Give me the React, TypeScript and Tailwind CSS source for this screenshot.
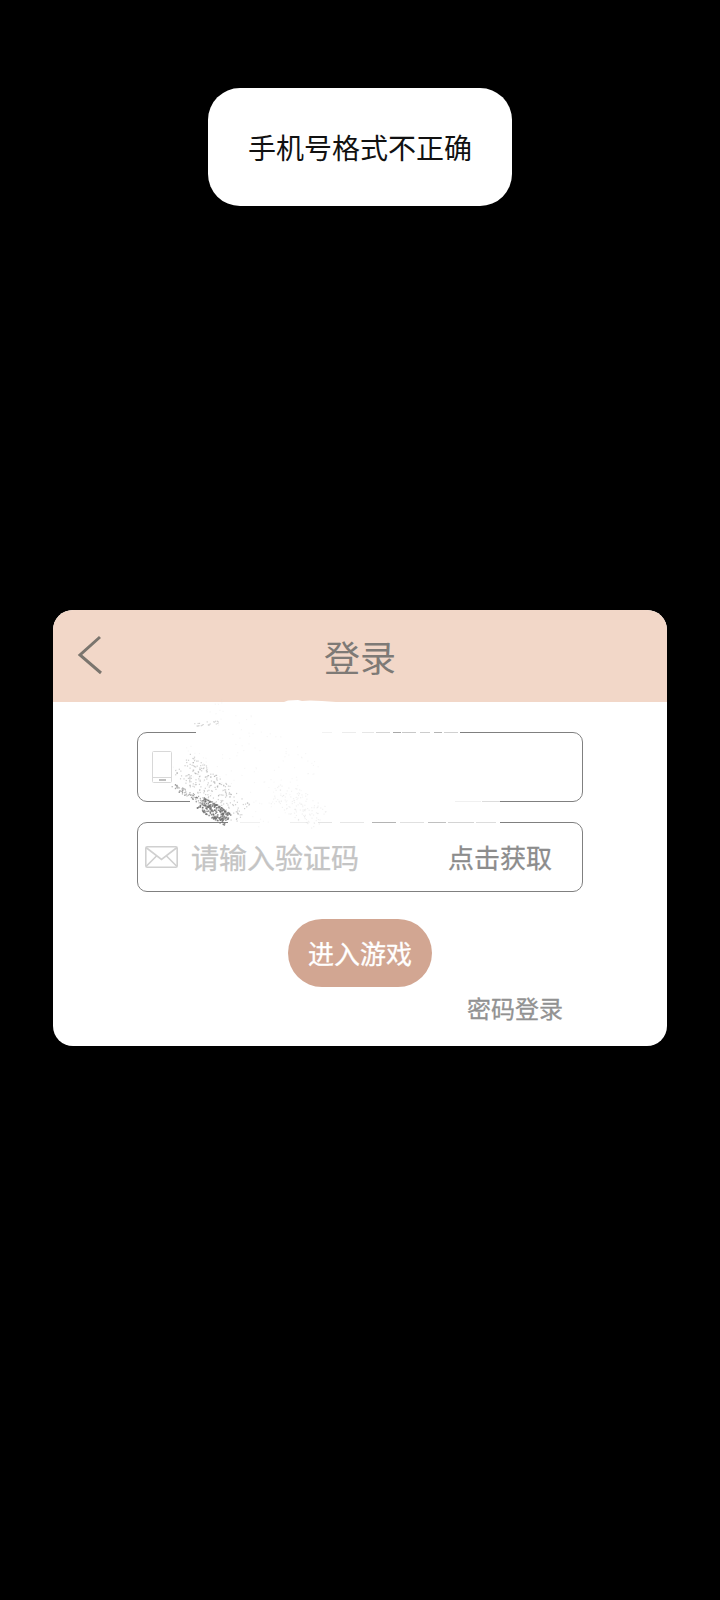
import React from "react";

const FONT = "font-['Noto_Sans_CJK_SC','Noto_Sans',sans-serif]";

function rng(seed: number) {
  let s = seed;
  return () => {
    s = (s * 16807) % 2147483647;
    return (s - 1) / 2147483646;
  };
}

type Band = { x1: number; y1: number; x2: number; y2: number; w: number; n: number; c: string; o: number; s: number };

const bands: Band[] = [
  { x1: 200, y1: 802, x2: 227, y2: 819, w: 7, n: 190, c: "#6f6f6f", o: 0.8, s: 1.5 },
  { x1: 182, y1: 762, x2: 242, y2: 815, w: 14, n: 240, c: "#8a8a8a", o: 0.4, s: 1.2 },
  { x1: 172, y1: 785, x2: 205, y2: 803, w: 3, n: 70, c: "#777777", o: 0.6, s: 1.2 },
  { x1: 195, y1: 730, x2: 300, y2: 800, w: 45, n: 140, c: "#e0e0e0", o: 0.3, s: 1.1 },
  { x1: 275, y1: 790, x2: 322, y2: 818, w: 14, n: 130, c: "#d4d4d4", o: 0.3, s: 1.2 },
  { x1: 194, y1: 724, x2: 218, y2: 722, w: 2, n: 20, c: "#a0a0a0", o: 0.5, s: 1.1 },
];

function Smudge() {
  const r = rng(4711);
  const dots: React.ReactNode[] = [];
  bands.forEach((b, bi) => {
    const dx = b.x2 - b.x1;
    const dy = b.y2 - b.y1;
    const len = Math.hypot(dx, dy) || 1;
    for (let i = 0; i < b.n; i++) {
      const t = r();
      const off = (r() - 0.5) * 2 * b.w;
      dots.push(
        <rect
          key={`${bi}-${i}`}
          x={b.x1 + dx * t - (dy / len) * off}
          y={b.y1 + dy * t + (dx / len) * off}
          width={b.s}
          height={b.s}
          fill={b.c}
          opacity={b.o}
        />
      );
    }
  });
  const dashes: [number, number, number, string][] = [
    [322, 732, 10, "#f2f2f2"], [342, 732, 14, "#ececec"], [362, 732, 12, "#e6e6e6"], [376, 732, 14, "#d4d4d4"], [393, 732, 8, "#a8a8a8"], [402, 732, 14, "#c8c8c8"], [420, 732, 10, "#cccccc"], [434, 732, 8, "#b4b4b4"], [444, 732, 14, "#d0d0d0"],
    [455, 801, 26, "#f0f0f0"], [482, 801, 18, "#dcdcdc"],
    [240, 822, 20, "#f0f0f0"], [290, 822, 18, "#eeeeee"], [318, 822, 14, "#e4e4e4"], [340, 822, 24, "#e6e6e6"], [372, 822, 24, "#b4b4b4"], [400, 822, 24, "#e0e0e0"], [428, 822, 18, "#c0c0c0"], [448, 822, 26, "#d4d4d4"], [476, 822, 20, "#dcdcdc"],
  ];
  return (
    <svg className="absolute left-0 top-0 w-[614px] h-[436px] pointer-events-none" viewBox="53 610 614 436">
      <path d="M284 702 L288 700.5 L298 700 L302 701 L310 700.5 L322 701 L336 702Z" fill="#ffffff" />
      <rect x="196" y="730" width="264" height="4" fill="#ffffff" />
      <rect x="190" y="799" width="310" height="5" fill="#ffffff" />
      <rect x="228" y="820" width="272" height="4" fill="#ffffff" />
      {dashes.map(([x, y, w, c], i) => (
        <rect key={i} x={x} y={y} width={w} height="1" fill={c} />
      ))}
      {dots}
    </svg>
  );
}

export default function App() {
  return (
    <div className={`${FONT} relative min-h-[1600px] w-[720px] bg-black flex flex-col items-center overflow-hidden`}>
      <div className="mt-[88px] w-[304px] h-[118px] rounded-[32px] bg-white flex items-center justify-center text-[28px] leading-none text-[#111111]">
        手机号格式不正确
      </div>

      <div className="relative mt-[404px] w-[614px] h-[436px] rounded-[20px] bg-white overflow-hidden">
        <div className="relative h-[92px] bg-[#f2d7c8] flex items-center justify-center">
          <svg className="absolute left-[24px] top-[25px] w-[26px] h-[40px]" viewBox="0 0 26 40" fill="none">
            <path d="M23 2 L3 20 L24 38" stroke="#7b756e" strokeWidth="3" />
          </svg>
          <span className="text-[36px] leading-none text-[#7e7a76]">登录</span>
        </div>

        <div className="flex flex-col items-center pt-[30px]">
          <div className="w-[446px] h-[70px] rounded-[10px] border border-[#808080] flex items-center pl-[14px]">
            <svg className="w-[20px] h-[32px]" viewBox="0 0 20 32" fill="none" stroke="#d8d8d8" strokeWidth="1">
              <rect x="0.5" y="0.5" width="19" height="31" rx="1" />
              <path d="M0.5 26.5 H19.5" />
              <path d="M7 29 H14" stroke="#c0c0c0" strokeWidth="2" />
            </svg>
          </div>

          <div className="mt-[20px] w-[446px] h-[70px] rounded-[10px] border border-[#808080] flex items-center pl-[7px] pr-[30px]">
            <svg className="w-[33px] h-[22px] shrink-0" viewBox="0 0 33 22" fill="none" stroke="#d0d0d0" strokeWidth="1.6">
              <rect x="0.8" y="0.8" width="31.4" height="20.4" rx="1.5" />
              <path d="M1 1.5 L16.5 13.5 L32 1.5 M1 20.5 L12 9.5 M32 20.5 L21 9.5" />
            </svg>
            <span className="ml-[13px] text-[28px] leading-none text-[#c4c4c4] [-webkit-text-stroke:0.3px_#c4c4c4]">请输入验证码</span>
            <span className="ml-auto text-[26px] leading-none text-[#8c8c8c] [-webkit-text-stroke:0.3px_#8c8c8c]">点击获取</span>
          </div>

          <div className="mt-[27px] w-[144px] h-[68px] rounded-full bg-[#d2a692] flex items-center justify-center text-[26px] leading-none text-white [-webkit-text-stroke:0.3px_#ffffff]">
            进入游戏
          </div>

          <div className="mt-[7px] w-full flex justify-end pr-[104px] text-[24px] leading-[28px] text-[#929292] [-webkit-text-stroke:0.3px_#929292]">
            密码登录
          </div>
        </div>

        <Smudge />
      </div>
    </div>
  );
}
